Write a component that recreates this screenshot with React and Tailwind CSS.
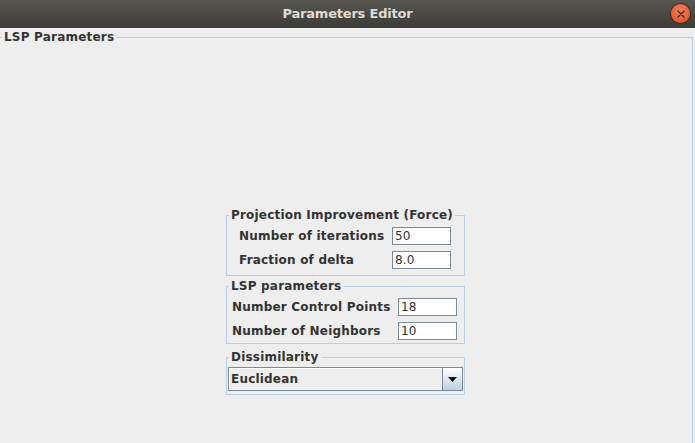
const fieldRows = {
    force: [
        { label: 'Number of iterations', value: '50' },
        { label: 'Fraction of delta', value: '8.0' },
    ],
    lsp: [
        { label: 'Number Control Points', value: '18' },
        { label: 'Number of Neighbors', value: '10' },
    ],
}

const TitleBar = () => (
    <div className='relative h-[28px] flex items-center justify-center bg-gradient-to-b from-[#595751] to-[#3c3b37]'>
        <span className='text-[13px] font-bold text-[#dfdbd2] font-["DejaVu_Sans",sans-serif] tracking-[-0.2px]'>Parameters Editor</span>
        <div className='absolute right-[5px] top-[4px] w-[19px] h-[19px] rounded-full bg-[radial-gradient(circle_at_50%_35%,#f5805c,#df4a1f)] shadow-[0_0_0_1px_#3a2a22] flex items-center justify-center'>
            <svg width='8' height='8' viewBox='0 0 8 8'>
                <path d='M1 1 L7 7 M7 1 L1 7' stroke='#3c2a20' strokeWidth='1.4' strokeLinecap='round' />
            </svg>
        </div>
    </div>
)

const TextField = ({ value }) => (
    <div className='w-[59px] h-[18px] bg-white border border-[#7a8a99] pl-[2px] flex items-center text-[12px] tracking-[0.2px] text-[#333]'>
        {value}
    </div>
)

const Group = ({ title, className = '', children }) => (
    <fieldset className={`w-[239px] border border-[#b8cfe5] ${className}`}>
        <legend className='ml-[2px] px-[2px] text-[12px] leading-[14px] tracking-[0.2px] font-bold text-[#333]'>{title}</legend>
        {children}
    </fieldset>
)

const ComboBox = ({ value }) => (
    <div className='mx-[1px] mt-[3px] mb-[3px] h-[24px] flex border border-[#7a8a99]'>
        <div className='flex-1 flex items-center pl-[2px] bg-[#eeeeee] shadow-[inset_1px_1px_0_#ffffff] text-[12px] tracking-[0.2px] font-bold text-[#333]'>{value}</div>
        <div className='w-[20px] border-l border-[#7a8a99] bg-gradient-to-b from-[#ffffff] to-[#bcd0e6] flex items-center justify-center'>
            <svg width='9' height='5' viewBox='0 0 9 5'>
                <path d='M0 0 H9 L4.5 5 Z' fill='#111' />
            </svg>
        </div>
    </div>
)

export default function App() {
    return (
        <div className='w-[695px] h-[443px] overflow-hidden bg-[#eeeeee] font-["DejaVu_Sans",sans-serif]'>
            <TitleBar />
            <fieldset className='mt-[2px] mr-[2px] h-[440px] border border-l-0 border-b-0 border-[#b8cfe5]'>
                <legend className='ml-[2px] px-[2px] text-[12px] leading-[14px] tracking-[0.2px] font-bold text-[#333]'>LSP Parameters</legend>
                <div className='pt-[164px] pl-[226px] flex flex-col items-start'>
                    <Group title='Projection Improvement (Force)'>
                        <div className='flex flex-col gap-[6px] pt-[5px] pb-[6px]'>
                            {fieldRows.force.map(row => (
                                <div key={row.label} className='flex items-center'>
                                    <span className='w-[165px] pl-[12px] text-[12px] tracking-[0.2px] font-bold text-[#333]'>{row.label}</span>
                                    <TextField value={row.value} />
                                </div>
                            ))}
                        </div>
                    </Group>
                    <Group title='LSP parameters' className='mt-[3px]'>
                        <div className='flex flex-col gap-[6px] pt-[5px] pb-[3px]'>
                            {fieldRows.lsp.map(row => (
                                <div key={row.label} className='flex items-center'>
                                    <span className='w-[171px] pl-[5px] text-[12px] tracking-[0.2px] font-bold text-[#333]'>{row.label}</span>
                                    <TextField value={row.value} />
                                </div>
                            ))}
                        </div>
                    </Group>
                    <Group title='Dissimilarity' className='mt-[6px]'>
                        <ComboBox value='Euclidean' />
                    </Group>
                </div>
            </fieldset>
        </div>
    )
}
